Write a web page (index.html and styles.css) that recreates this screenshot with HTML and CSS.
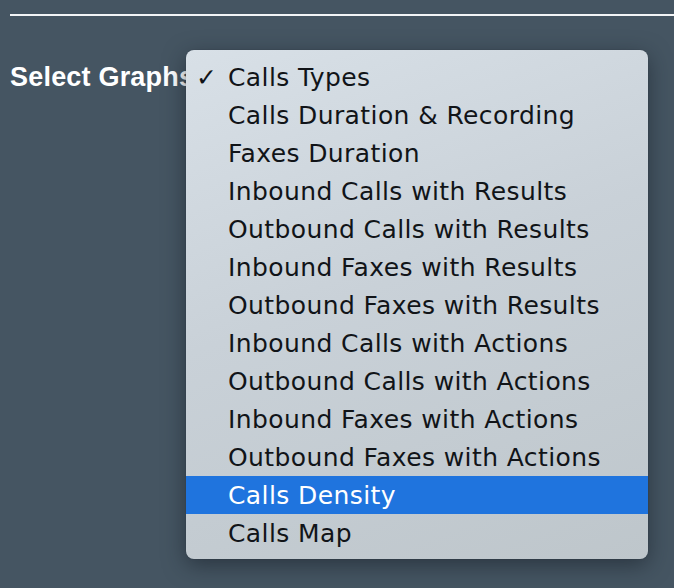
FILE: index.html
```html
<!DOCTYPE html>
<html>
<head>
<meta charset="utf-8">
<link rel="stylesheet" href="styles.css">
</head>
<body>
<div class="page">
  <hr class="rule">
  <div class="row">
    <label class="label">Select Graphs</label>
    <div class="menu">
      <div class="item checked"><span class="check">✓</span>Calls Types</div>
      <div class="item">Calls Duration &amp; Recording</div>
      <div class="item">Faxes Duration</div>
      <div class="item">Inbound Calls with Results</div>
      <div class="item">Outbound Calls with Results</div>
      <div class="item">Inbound Faxes with Results</div>
      <div class="item">Outbound Faxes with Results</div>
      <div class="item">Inbound Calls with Actions</div>
      <div class="item">Outbound Calls with Actions</div>
      <div class="item">Inbound Faxes with Actions</div>
      <div class="item">Outbound Faxes with Actions</div>
      <div class="item active">Calls Density</div>
      <div class="item">Calls Map</div>
    </div>
  </div>
</div>
</body>
</html>
```
FILE: styles.css
```css
html, body {
  margin: 0;
  padding: 0;
  background: #455562;
  height: 100%;
  overflow: hidden;
}
.page {
  padding: 14px 0 0 10px;
}
.rule {
  margin: 0;
  border: 0;
  height: 2px;
  background: #f2f4f6;
}
.row {
  position: relative;
  margin-top: 46px;
}
.label {
  display: block;
  font-family: "Liberation Sans", Arial, sans-serif;
  font-weight: bold;
  font-size: 27px;
  color: #ffffff;
  letter-spacing: 0.2px;
  line-height: 30px;
  white-space: nowrap;
}
.menu {
  position: absolute;
  left: 176px;
  top: -12px;
  width: 462px;
  padding: 8px 0 7px;
  border-radius: 8px;
  background: linear-gradient(160deg, #d8e0e7 0%, #c9d1d8 45%, #bec6cb 100%);
  box-shadow: 0 6px 22px rgba(20, 28, 36, 0.55), 0 0 1px rgba(0,0,0,0.4);
  font-family: "DejaVu Sans", sans-serif;
  font-size: 25px;
  letter-spacing: 0.4px;
  color: #111418;
}
.item {
  position: relative;
  height: 38px;
  line-height: 39px;
  padding-left: 42px;
  white-space: nowrap;
}
.check {
  position: absolute;
  left: 10px;
  top: 0;
  font-size: 25px;
  font-weight: bold;
  font-family: "DejaVu Sans", sans-serif;
}
.active {
  background: #1f74de;
  color: #ffffff;
}
```
